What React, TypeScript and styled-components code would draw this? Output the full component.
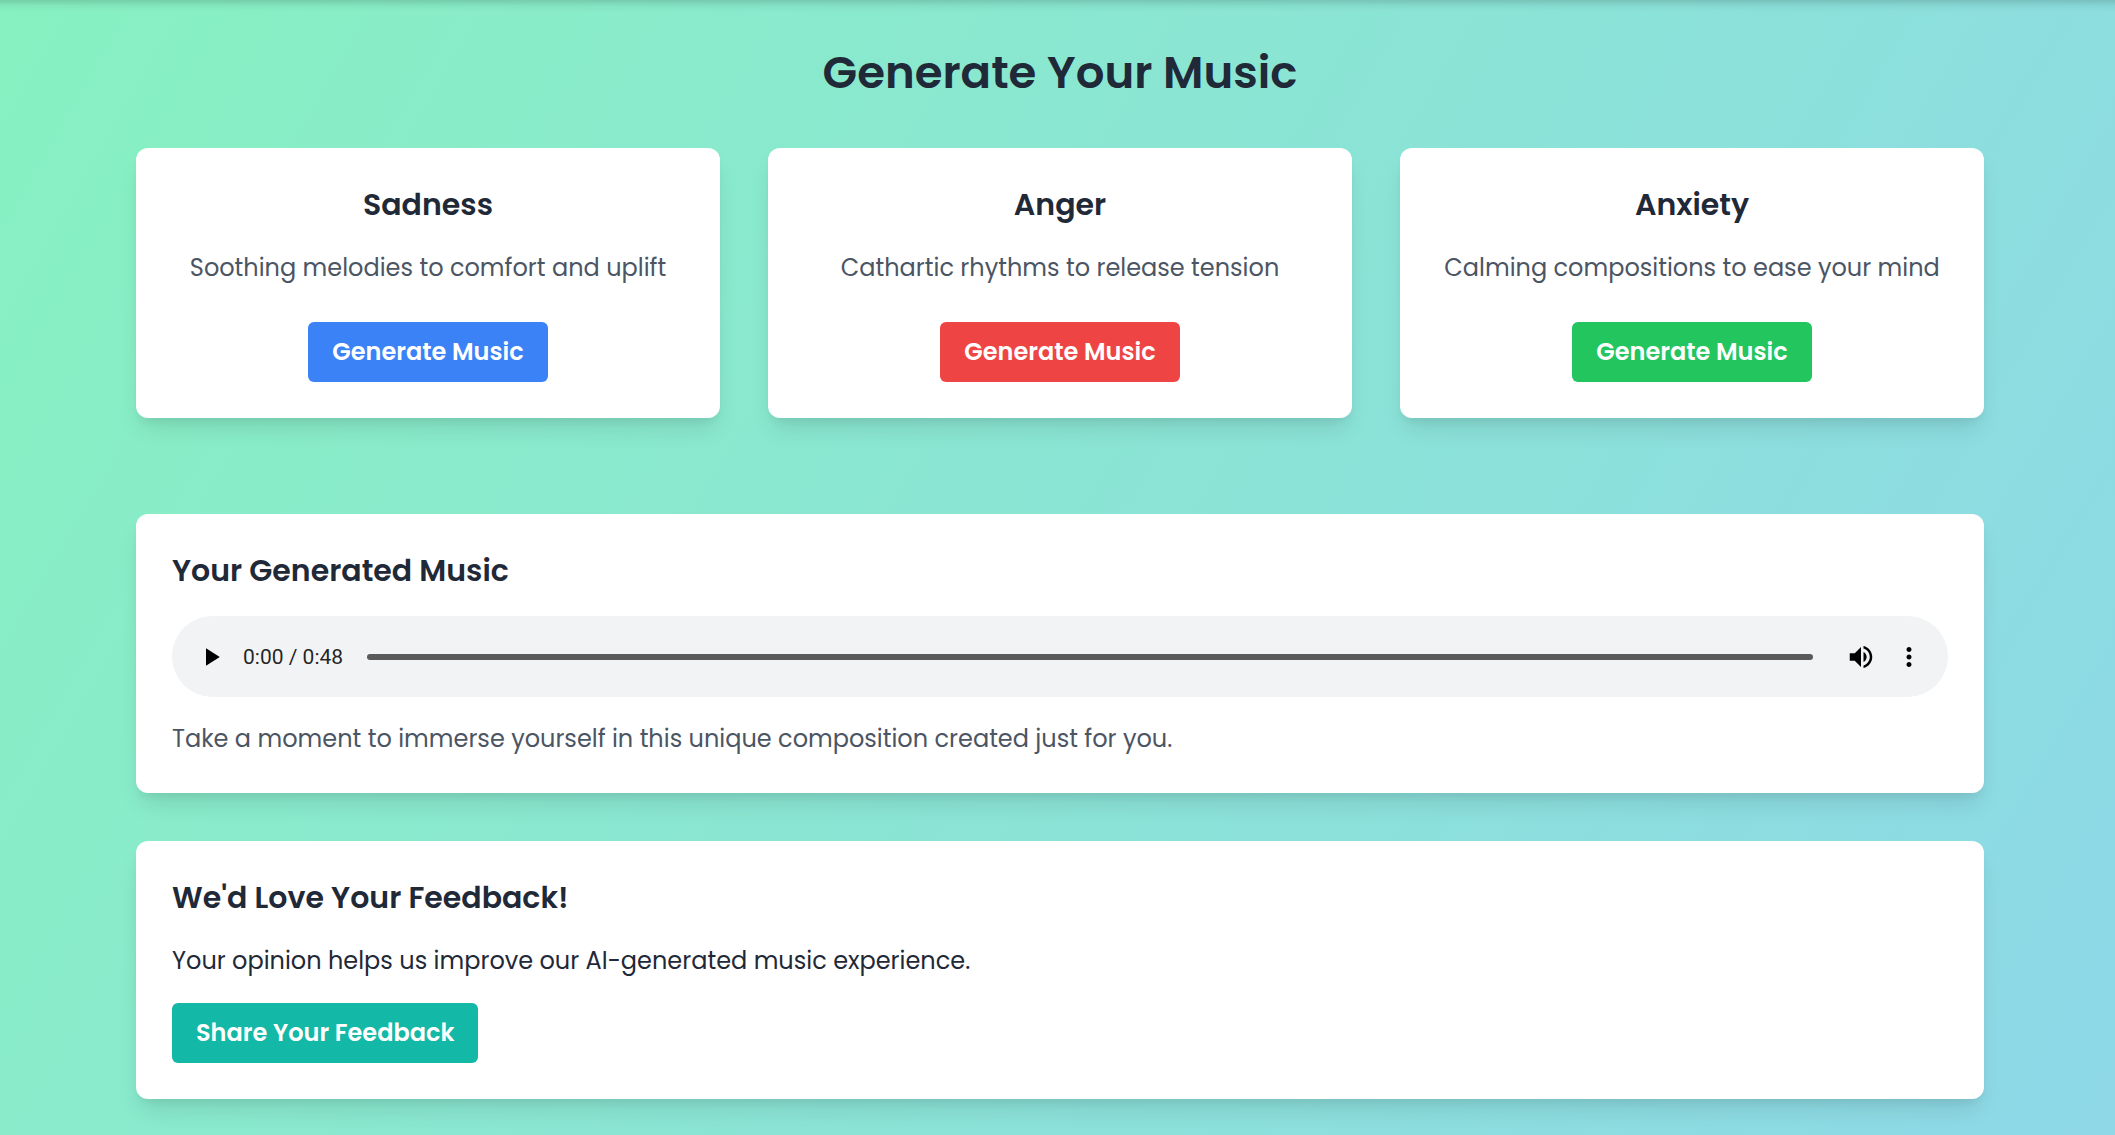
import React, { useState } from "react";
import styled, { createGlobalStyle } from "styled-components";

const GlobalStyle = createGlobalStyle`
  *, *::before, *::after { box-sizing: border-box; }
  html { background: #8fd3f4; }
  body {
    margin: 0;
    min-height: 100vh;
    font-family: Poppins, Inter, "Open Sans", sans-serif;
    font-size: 24px;
    line-height: 36px;
    color: #1f2937;
    background: linear-gradient(120deg, #87f1c1, #8ed8e8);
  }
  h1, h2, h3, p { margin: 0; }
`;

const HeaderShade = styled.div`
  height: 12px;
  background: linear-gradient(rgba(0, 0, 0, 0.14), rgba(0, 0, 0, 0.04) 50%, transparent);
`;

const Page = styled.main`
  display: flex;
  flex-direction: column;
  gap: 48px;
  padding: 34px 131px 36px 136px;
`;

const Title = styled.h1`
  font-size: 45px;
  line-height: 54px;
  font-weight: 600;
  text-align: center;
`;

const Moods = styled.section`
  display: grid;
  grid-template-columns: repeat(3, 1fr);
  gap: 48px;
  margin-bottom: 48px;
`;

const Card = styled.section<{ $centered?: boolean }>`
  display: flex;
  flex-direction: column;
  align-items: ${(p) => (p.$centered ? "center" : "flex-start")};
  gap: 24px;
  padding: 36px;
  background: #fff;
  border-radius: 12px;
  box-shadow: 0 15px 23px -5px rgba(0, 0, 0, 0.1), 0 6px 9px -3px rgba(0, 0, 0, 0.06);
`;

const Heading = styled.h2`
  font-size: 30px;
  line-height: 42px;
  font-weight: 600;
`;

const Text = styled.p<{ $muted?: boolean }>`
  color: ${(p) => (p.$muted ? "#4b5563" : "inherit")};
`;

const Button = styled.button<{ $color: string; $spaced?: boolean }>`
  height: 60px;
  margin: ${(p) => (p.$spaced ? "12px 0 0" : "0")};
  padding: 0 24px;
  border: 0;
  border-radius: 6px;
  background: ${(p) => p.$color};
  color: #fff;
  font: inherit;
  font-weight: 600;
  cursor: pointer;
`;

const Player = styled.div`
  display: flex;
  align-items: center;
  align-self: stretch;
  height: 81px;
  padding: 0 15px;
  border-radius: 41px;
  background: #f1f3f4;
`;

const IconButton = styled.button`
  display: flex;
  align-items: center;
  justify-content: center;
  width: 48px;
  height: 48px;
  padding: 0;
  border: 0;
  background: none;
  color: #000;
  cursor: pointer;
`;

const Icon = styled.svg`
  width: 30px;
  height: 30px;
  fill: currentColor;
`;

const Time = styled.span`
  padding-left: 8px;
  font-family: Roboto, sans-serif;
  font-size: 21px;
  color: rgba(0, 0, 0, 0.87);
  white-space: nowrap;
`;

const Timeline = styled.input`
  flex: 1;
  min-width: 0;
  height: 6px;
  margin: 0 24px;
  appearance: none;
  border-radius: 3px;
  background: #5a5a5a;
  cursor: pointer;

  &::-webkit-slider-thumb {
    appearance: none;
    width: 1px;
    height: 6px;
    background: transparent;
  }
`;

const moods = [
  { name: "Sadness", text: "Soothing melodies to comfort and uplift", color: "#3b82f6" },
  { name: "Anger", text: "Cathartic rhythms to release tension", color: "#ef4444" },
  { name: "Anxiety", text: "Calming compositions to ease your mind", color: "#22c55e" },
];

export default function App() {
  const [seconds, setSeconds] = useState(0);

  return (
    <>
      <GlobalStyle />
      <HeaderShade />
      <Page>
        <Title>Generate Your Music</Title>
        <Moods>
          {moods.map((mood) => (
            <Card key={mood.name} $centered>
              <Heading>{mood.name}</Heading>
              <Text $muted>{mood.text}</Text>
              <Button type="button" $color={mood.color} $spaced>
                Generate Music
              </Button>
            </Card>
          ))}
        </Moods>
        <Card>
          <Heading>Your Generated Music</Heading>
          <Player>
            <IconButton type="button" aria-label="Play">
              <Icon viewBox="0 0 24 24"><path d="M8 5v14l11-7z" /></Icon>
            </IconButton>
            <Time>0:{String(seconds).padStart(2, "0")} / 0:48</Time>
            <Timeline
              type="range"
              aria-label="Seek"
              min={0}
              max={48}
              value={seconds}
              onChange={(e) => setSeconds(Number(e.target.value))}
            />
            <IconButton type="button" aria-label="Mute">
              <Icon viewBox="0 0 24 24">
                <path d="M3 9v6h4l5 5V4L7 9H3zm13.5 3c0-1.77-1.02-3.29-2.5-4.03v8.05c1.48-.73 2.5-2.25 2.5-4.02zM14 3.23v2.06c2.89.86 5 3.54 5 6.71s-2.11 5.85-5 6.71v2.06c4.01-.91 7-4.49 7-8.77s-2.99-7.86-7-8.77z" />
              </Icon>
            </IconButton>
            <IconButton type="button" aria-label="More options">
              <Icon viewBox="0 0 24 24">
                <path d="M12 8c1.1 0 2-.9 2-2s-.9-2-2-2-2 .9-2 2 .9 2 2 2zm0 2c-1.1 0-2 .9-2 2s.9 2 2 2 2-.9 2-2-.9-2-2-2zm0 6c-1.1 0-2 .9-2 2s.9 2 2 2 2-.9 2-2-.9-2-2-2z" />
              </Icon>
            </IconButton>
          </Player>
          <Text $muted>Take a moment to immerse yourself in this unique composition created just for you.</Text>
        </Card>
        <Card>
          <Heading>We'd Love Your Feedback!</Heading>
          <Text>Your opinion helps us improve our AI-generated music experience.</Text>
          <Button type="button" $color="#14b8a6">Share Your Feedback</Button>
        </Card>
      </Page>
    </>
  );
}
